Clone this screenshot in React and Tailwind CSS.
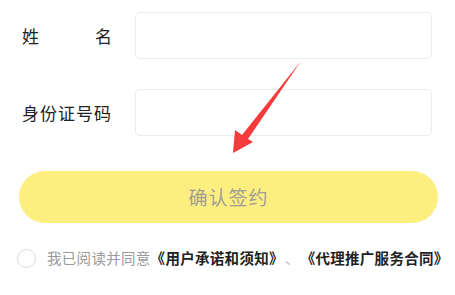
import React from "react";

const Field = ({ label, spread }) => (
  <div className="flex items-center pl-[22px]">
    <div
      className={`w-[90px] mr-[23px] text-[17px] leading-none text-[#222] ${
        spread ? "flex justify-between" : "tracking-[1px]"
      }`}
    >
      {spread ? label.split("").map((c) => <span key={c}>{c}</span>) : label}
    </div>
    <div className="w-[297px] h-[47px] rounded-[5px] border border-[#ebebeb] bg-white" />
  </div>
);

const App = () => {
  return (
    <div
      className="relative w-[455px] h-[295px] bg-white overflow-hidden"
      style={{ fontFamily: '"Noto Sans CJK SC", "Noto Sans", sans-serif' }}
    >
      <div className="pt-[12px] flex flex-col gap-[30px]">
        <Field label="姓名" spread />
        <Field label="身份证号码" />
      </div>

      {/* 按钮 */}
      <div className="mt-[35px] mx-[19px] w-[419px] h-[52px] rounded-full bg-[#fdee80] flex items-center justify-center">
        <span className="text-[19px] text-[#a09d96] tracking-[1px]">确认签约</span>
      </div>

      {/* 协议 */}
      <div className="mt-[26px] flex items-center pl-[17px] text-[14.5px] leading-none whitespace-nowrap tracking-[0.3px]">
        <span className="w-[19px] h-[19px] rounded-full border-[1.5px] border-[#dcdcdc] mr-[11px] shrink-0" />
        <span className="text-[#9a9a9a]">我已阅读并同意</span>
        <span className="font-bold text-[#222]">《用户承诺和须知》</span>
        <span className="text-[#bbb] mx-[1px]">、</span>
        <span className="font-bold text-[#222]">《代理推广服务合同》</span>
      </div>

      {/* 红色箭头 */}
      <svg className="absolute left-0 top-0" width="455" height="295" viewBox="0 0 455 295">
        <polygon
          points="301,61 248,139 253,142 233,153 235,130 242,135"
          fill="#f73a3a"
        />
      </svg>
    </div>
  );
};

export default App;
